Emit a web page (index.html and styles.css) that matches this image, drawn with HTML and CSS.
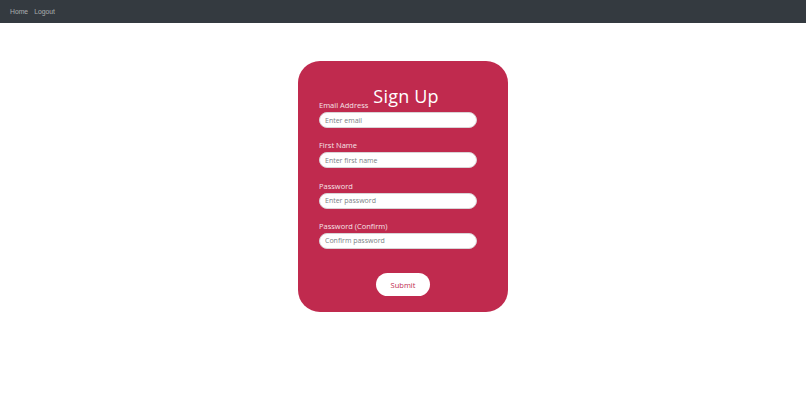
FILE: index.html
```html
<!DOCTYPE html>
<html lang="en">
<head>
<meta charset="utf-8">
<title>Sign Up</title>
<link rel="stylesheet" href="styles.css">
</head>
<body>
<nav class="navbar">
  <a class="nav-link" href="#">Home</a>
  <a class="nav-link" href="#">Logout</a>
</nav>
<main class="page">
  <form class="card">
    <div class="group">
      <div class="title-row">
        <label class="label" for="email">Email Address</label>
        <h1 class="title">Sign Up</h1>
      </div>
      <input class="input" id="email" type="email" placeholder="Enter email">
    </div>
    <div class="group">
      <label class="label" for="first">First Name</label>
      <input class="input" id="first" type="text" placeholder="Enter first name">
    </div>
    <div class="group">
      <label class="label" for="pw1">Password</label>
      <input class="input" id="pw1" type="password" placeholder="Enter password">
    </div>
    <div class="group">
      <label class="label" for="pw2">Password (Confirm)</label>
      <input class="input" id="pw2" type="password" placeholder="Confirm password">
    </div>
    <div class="actions">
      <button class="submit" type="button">Submit</button>
    </div>
  </form>
</main>
</body>
</html>
```
FILE: styles.css
```css
* { box-sizing: border-box; }
body {
  margin: 0;
  background: #ffffff;
  font-family: "Open Sans", "Noto Sans", sans-serif;
}
.navbar {
  height: 23px;
  background: #343a40;
  display: flex;
  align-items: center;
  gap: 6px;
  padding-left: 10px;
}
.nav-link {
  color: rgba(255, 255, 255, 0.58);
  text-decoration: none;
  font-family: "Liberation Sans", Arial, sans-serif;
  font-size: 6.8px;
}
.page {
  display: flex;
  justify-content: center;
  padding-top: 38px;
}
.card {
  width: 210px;
  height: 251px;
  background: #c02a4e;
  border-radius: 22px;
  padding: 25px 31px 16px 21px;
  display: flex;
  flex-direction: column;
}
.group {
  display: flex;
  flex-direction: column;
  margin-bottom: 12.3px;
}
.title-row {
  display: flex;
  align-items: flex-end;
  gap: 5px;
  margin-top: -1px;
}
.title {
  margin: 0 0 5px;
  color: #ffffff;
  font-size: 18px;
  line-height: 22px;
  font-weight: 500;
  letter-spacing: 0.2px;
}
.label {
  color: #f6e3e8;
  font-size: 7.5px;
  line-height: 11px;
  font-weight: 500;
  margin-bottom: 1px;
}
.input {
  width: 158px;
  height: 16px;
  border: 1px solid #d9d3d6;
  border-radius: 8px;
  background: #ffffff;
  padding: 0 5px;
  font-family: inherit;
  font-size: 7px;
  color: #495057;
  outline: none;
}
.input::placeholder { color: #7b7f85; }
.actions {
  display: flex;
  justify-content: center;
  padding-top: 12px;
  padding-left: 10px;
}
.submit {
  width: 54px;
  height: 23px;
  border: none;
  border-radius: 12px;
  background: #ffffff;
  color: #c02a4e;
  font-family: inherit;
  font-size: 7.5px;
  cursor: pointer;
}
```
